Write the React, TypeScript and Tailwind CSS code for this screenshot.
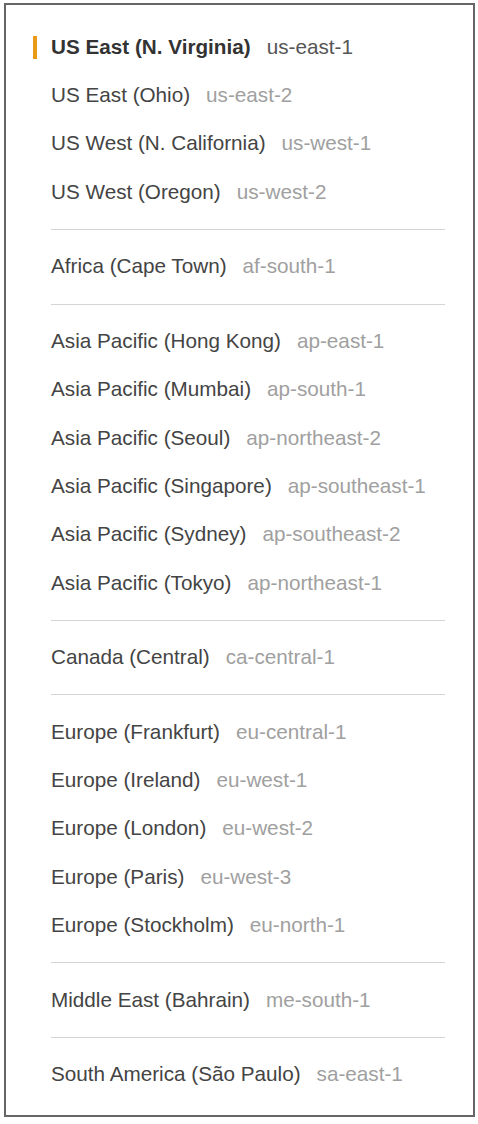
import React from 'react';

type Region = { name: string; code: string };

const groups: Region[][] = [
  [
    { name: 'US East (N. Virginia)', code: 'us-east-1' },
    { name: 'US East (Ohio)', code: 'us-east-2' },
    { name: 'US West (N. California)', code: 'us-west-1' },
    { name: 'US West (Oregon)', code: 'us-west-2' },
  ],
  [{ name: 'Africa (Cape Town)', code: 'af-south-1' }],
  [
    { name: 'Asia Pacific (Hong Kong)', code: 'ap-east-1' },
    { name: 'Asia Pacific (Mumbai)', code: 'ap-south-1' },
    { name: 'Asia Pacific (Seoul)', code: 'ap-northeast-2' },
    { name: 'Asia Pacific (Singapore)', code: 'ap-southeast-1' },
    { name: 'Asia Pacific (Sydney)', code: 'ap-southeast-2' },
    { name: 'Asia Pacific (Tokyo)', code: 'ap-northeast-1' },
  ],
  [{ name: 'Canada (Central)', code: 'ca-central-1' }],
  [
    { name: 'Europe (Frankfurt)', code: 'eu-central-1' },
    { name: 'Europe (Ireland)', code: 'eu-west-1' },
    { name: 'Europe (London)', code: 'eu-west-2' },
    { name: 'Europe (Paris)', code: 'eu-west-3' },
    { name: 'Europe (Stockholm)', code: 'eu-north-1' },
  ],
  [{ name: 'Middle East (Bahrain)', code: 'me-south-1' }],
  [{ name: 'South America (São Paulo)', code: 'sa-east-1' }],
];

export default function App() {
  return (
    <div className="bg-white px-[4px] pt-[3px]" style={{ fontFamily: '"Liberation Sans", Arial, sans-serif' }}>
      <div className="w-[471px] border-2 border-[#666] pt-[18px] pb-[16px] pl-[27px] pr-[28px]">
        {groups.map((group, gi) => (
          <div key={gi}>
            {gi > 0 && <div className="ml-[18px] my-[12.7px] h-px bg-[#d5d5d5]" />}
            {group.map((r) => {
              const active = r.code === 'us-east-1';
              return (
                <div key={r.code} className="h-[48.3px] flex items-center text-[20.7px] leading-none">
                  <div className={`w-[4px] h-[23px] mr-[14px] ${active ? 'bg-[#eb9a17]' : ''}`} />
                  <span className={active ? 'font-bold text-[#333]' : 'text-[#444]'}>{r.name}</span>
                  <span className={`ml-[16px] ${active ? 'text-[#555]' : 'text-[#a0a0a0]'}`}>{r.code}</span>
                </div>
              );
            })}
          </div>
        ))}
      </div>
    </div>
  );
}
